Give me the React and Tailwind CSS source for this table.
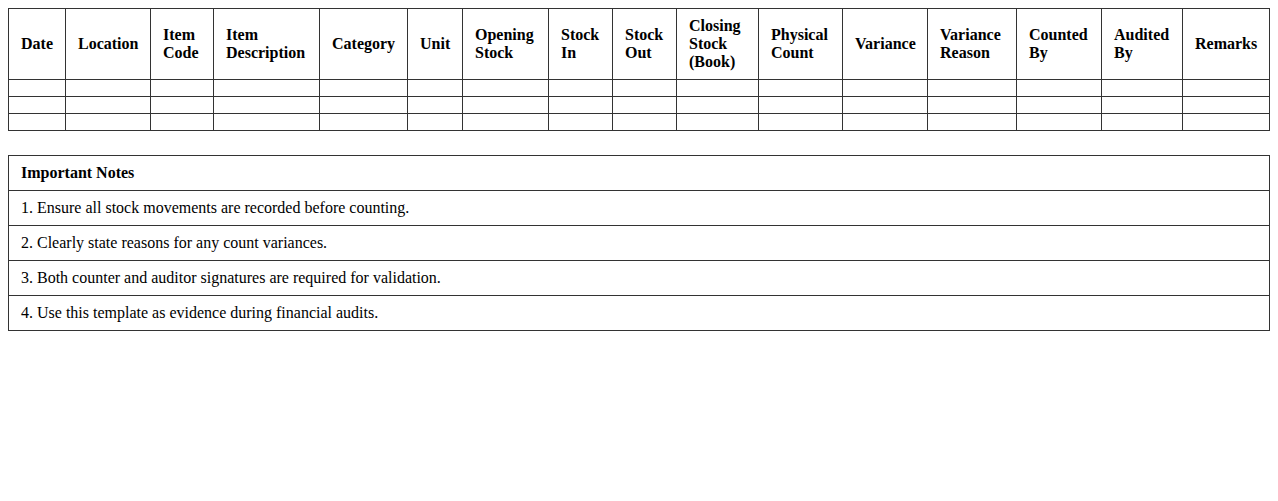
import React from 'react'

const columns = [
  { label: ['Date'], w: 'w-[57px]' },
  { label: ['Location'], w: 'w-[85px]' },
  { label: ['Item', 'Code'], w: 'w-[63px]' },
  { label: ['Item', 'Description'], w: 'w-[106px]' },
  { label: ['Category'], w: 'w-[88px]' },
  { label: ['Unit'], w: 'w-[55px]' },
  { label: ['Opening', 'Stock'], w: 'w-[86px]' },
  { label: ['Stock', 'In'], w: 'w-[64px]' },
  { label: ['Stock', 'Out'], w: 'w-[64px]' },
  { label: ['Closing', 'Stock', '(Book)'], w: 'w-[82px]' },
  { label: ['Physical', 'Count'], w: 'w-[84px]' },
  { label: ['Variance'], w: 'w-[85px]' },
  { label: ['Variance', 'Reason'], w: 'w-[89px]' },
  { label: ['Counted', 'By'], w: 'w-[85px]' },
  { label: ['Audited', 'By'], w: 'w-[81px]' },
  { label: ['Remarks'], w: 'w-[87px]' },
]

const notes = [
  '1. Ensure all stock movements are recorded before counting.',
  '2. Clearly state reasons for any count variances.',
  '3. Both counter and auditor signatures are required for validation.',
  '4. Use this template as evidence during financial audits.',
]

const cell = 'border border-[#333] px-3 py-2 text-left align-middle'

export default function App() {
  return (
    <div className="min-h-screen bg-white p-2 text-[16px] leading-[18px] text-black" style={{ fontFamily: '"Liberation Serif", "Times New Roman", serif' }}>
      <table className="w-full table-fixed border-collapse">
        <colgroup>
          {columns.map((c, i) => (
            <col key={i} className={c.w} />
          ))}
        </colgroup>
        <thead>
          <tr>
            {columns.map((c, i) => (
              <th key={i} className={`${cell} font-bold`}>
                {c.label.map((line, j) => (
                  <div key={j}>{line}</div>
                ))}
              </th>
            ))}
          </tr>
        </thead>
        <tbody>
          {[0, 1, 2].map((r) => (
            <tr key={r}>
              {columns.map((c, i) => (
                <td key={i} className="border border-[#333] px-3 py-2"></td>
              ))}
            </tr>
          ))}
        </tbody>
      </table>

      <table className="mt-[24px] w-full border-collapse">
        <tbody>
          <tr>
            <td className={`${cell} font-bold`}>Important Notes</td>
          </tr>
          {notes.map((n) => (
            <tr key={n}>
              <td className={cell}>{n}</td>
            </tr>
          ))}
        </tbody>
      </table>
    </div>
  )
}
